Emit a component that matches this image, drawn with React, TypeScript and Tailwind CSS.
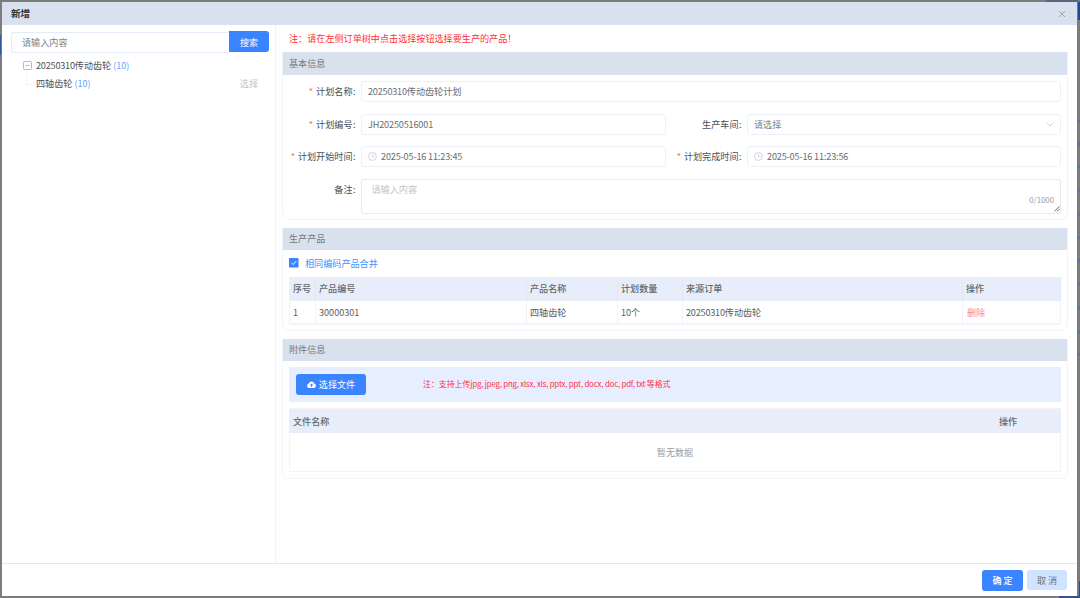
import type { ReactNode } from "react";

function Section({ title, className, titleClass, children }: { title: string; className: string; titleClass: string; children: ReactNode }) {
  return (
    <section className={`flex w-[786px] flex-col rounded-b-[7px] border border-t-0 border-[#f4f5fa] ${className}`}>
      <h2 className={`-mx-px shrink-0 border-x border-[#eef1f8] bg-[#dae1ee] pl-[6px] text-[#74787f] ${titleClass}`}>{title}</h2>
      {children}
    </section>
  );
}

function Label({ text, required, className }: { text: string; required?: boolean; className: string }) {
  return (
    <div className={`shrink-0 text-right leading-[20px] text-[#4b4e53] ${className}`}>
      {required && <span className="mr-[3px] text-[#f56c6c]">*</span>}
      {text}
      <span className="inline-block w-[4.5px] pl-[0.5px] text-left">:</span>
    </div>
  );
}

function Clock() {
  return (
    <svg viewBox="0 0 10 10" className="mr-[4px] size-[9px]" fill="none" stroke="#c0c4cc" strokeWidth="0.8">
      <circle cx="5" cy="5" r="4.4" />
      <path d="M5 2.4V5.3H7.4" />
    </svg>
  );
}

function Field({ className, children }: { className: string; children: ReactNode }) {
  return <div className={`flex h-[21px] items-center rounded-[3px] border border-[#edeffa] px-[6px] pb-px text-[#6a6c70] ${className}`}>{children}</div>;
}

const columns = "grid grid-cols-[26px_211px_91px_65px_280px_98px]";

export default function App() {
  return (
    <div className="relative flex h-[598px] w-[1080px] flex-col overflow-hidden bg-[#7d7c7d] pt-[2px] pl-[2px] font-['Noto_Sans_CJK_SC',sans-serif] text-[9.1px] leading-[14px]">
      <div className="flex h-[594px] w-[1075px] flex-col bg-white">
        <header className="flex h-[23px] shrink-0 items-center justify-between bg-[#dae1ee] pr-[11px] pl-[9px]">
          <h1 className="-mt-px text-[9.6px] font-bold text-[#303133]">新增</h1>
          <svg viewBox="0 0 8 8" className="size-[8px]" fill="none" stroke="#9a9da4" strokeWidth="0.9">
            <path d="M1 1 7 7M7 1 1 7" />
          </svg>
        </header>

        <main className="flex h-[538px] shrink-0">
          <aside className="w-[274px] shrink-0 border-r border-[#f1f2f5] pt-[6px] pl-[9px]">
            <div className="flex">
              <div className="mt-px h-[21px] w-[218px] rounded-l-[3px] border border-r-0 border-[#e3eaf8] pl-[10px] leading-[19px] text-[#7d8085]">请输入内容</div>
              <div className="h-[21px] w-[40px] rounded-r-[3px] bg-[#3a84ff] text-center leading-[22px] text-white">搜索</div>
            </div>
            <div className="mt-[3px] flex h-[18px] items-center pl-[12px] text-[#4f5257]">
              <svg viewBox="0 0 9 9" className="mr-[5px] -ml-[0.5px] size-[9px]" fill="none" stroke="#a7a9ae" strokeWidth="0.8">
                <rect x="0.5" y="0.5" width="8" height="8" rx="1" />
                <path d="M2.3 4.5H6.7" />
              </svg>
              <span className="-ml-[0.5px]"><span className="tracking-[-0.2px]">20250310</span>传动齿轮</span>
              <span className="ml-[2px] text-[#6aa2ff]">(10)</span>
            </div>
            <div className="flex h-[18px] items-center pr-[17px] pl-[15px] text-[#4f5257]">
              <span className="mr-[2px] h-[10px] w-[8px] -translate-y-[3px] border-b border-l border-dotted border-[#e8eaed]" />
              <span>四轴齿轮</span>
              <span className="ml-[2px] text-[#6aa2ff]">(10)</span>
              <span className="ml-auto text-[#c0c4cc]">选择</span>
            </div>
          </aside>

          <div className="pt-[7px] pl-[6px]">
            <p className="-mt-px h-[21px] pl-[7px] text-[#ff3131]">注：请在左侧订单树中点击选择按钮选择要生产的产品！</p>

            <Section title="基本信息" className="h-[168px]" titleClass="h-[23px] leading-[22px]">
              <div className="flex flex-col gap-[12px] pt-[6px] pr-[6px]">
                <div className="flex h-[21px]">
                  <Label text="计划名称" required className="w-[74px]" />
                  <Field className="ml-[4px] flex-1"><span className="tracking-[-0.2px]">20250310</span>传动齿轮计划</Field>
                </div>
                <div className="flex h-[20px]">
                  <Label text="计划编号" required className="w-[74px]" />
                  <Field className="ml-[4px] w-[305px] tracking-[-0.15px]">JH20250516001</Field>
                  <Label text="生产车间" className="w-[77px]" />
                  <Field className="ml-[4px] flex-1 justify-between">
                    <span className="text-[#7d8085]">请选择</span>
                    <svg viewBox="0 0 8 5" className="h-[5px] w-[8px]" fill="none" stroke="#c0c4cc" strokeWidth="0.8">
                      <path d="M.7.7 4 4.1 7.3.7" />
                    </svg>
                  </Field>
                </div>
                <div className="flex h-[21px]">
                  <Label text="计划开始时间" required className="w-[74px]" />
                  <Field className="ml-[4px] w-[305px] tracking-[-0.15px]"><Clock />2025-05-16 11:23:45</Field>
                  <Label text="计划完成时间" required className="w-[77px]" />
                  <Field className="ml-[4px] flex-1 tracking-[-0.15px]"><Clock />2025-05-16 11:23:56</Field>
                </div>
                <div className="flex h-[35px]">
                  <Label text="备注" className="w-[74px]" />
                  <div className="ml-[4px] flex flex-1 justify-between rounded-[2px] border border-[#e8eaf0] pl-[9.5px]">
                    <span className="mt-[2px] text-[#c0c4cc]">请输入内容</span>
                    <div className="flex flex-col items-end">
                      <span className="mt-[13px] mr-[6px] text-[7.8px] leading-[13px] text-[#9a9da2]">0/1000</span>
                      <svg viewBox="0 0 6 6" className="size-[6px]" fill="none" stroke="#66686c" strokeWidth="1">
                        <path d="M.3 5.5 5.5.3M3 5.5 5.5 3" />
                      </svg>
                    </div>
                  </div>
                </div>
              </div>
            </Section>

            <Section title="生产产品" className="mt-[8px] h-[103px]" titleClass="h-[22px] leading-[20px]">
              <div className="flex h-[27px] items-center pb-px pl-[6px]">
                <svg viewBox="0 0 10 10" className="mr-[6px] size-[10px]">
                  <rect width="9.5" height="9.5" rx="0.8" fill="#3a84ff" />
                  <path d="M2.4 4.8 4.2 6.6 7.3 3" fill="none" stroke="white" strokeWidth="0.9" />
                </svg>
                <span className="text-[#3a92ff]">相同编码产品合并</span>
              </div>
              <div className="ml-[6px] w-[772px] border-l border-[#edf0f8]">
                <div className={`${columns} h-[24px] bg-[#e7eef9] leading-[23px] font-medium text-[#65686d] [&>*]:border-r [&>*]:border-[#e0e7f8] [&>*]:pl-[3px]`}>
                  <span>序号</span><span>产品编号</span><span>产品名称</span><span>计划数量</span><span>来源订单</span><span>操作</span>
                </div>
                <div className={`${columns} h-[24px] border-b-2 border-[#f2f4fa] leading-[22px] text-[#5a5d62] [&>*]:border-r [&>*]:border-[#f0f2f9] [&>*]:pl-[3px]`}>
                  <span>1</span>
                  <span>30000301</span>
                  <span>四轴齿轮</span>
                  <span>10个</span>
                  <span><span className="tracking-[-0.2px]">20250310</span>传动齿轮</span>
                  <span><span className="ml-px text-[#f78989]">删除</span></span>
                </div>
              </div>
            </Section>

            <Section title="附件信息" className="mt-[8px] h-[140px]" titleClass="h-[22px] leading-[20px]">
              <div className="mt-[6px] ml-[6px] flex h-[35px] w-[772px] items-center bg-[#e6eeff] pl-[7px]">
                <div className="flex h-[21px] w-[70px] items-center justify-center rounded-[3px] bg-[#3a84ff] pb-px text-white">
                  <svg viewBox="0 0 18 14" className="mt-px mr-[3px] h-[7px] w-[9px]">
                    <path d="M4.5 14a4.5 4.5 0 0 1-.8-8.9 5.5 5.5 0 0 1 10.6 0A4.5 4.5 0 0 1 13.5 14z" fill="white" />
                    <path d="M9 12V7M6 9 9 5.8 12 9" fill="none" stroke="#3a84ff" strokeWidth="2" />
                  </svg>
                  选择文件
                </div>
                <span className="-mt-[2px] ml-[57px] text-[7.9px] text-[#ff3145]">注：支持上传<span className="tracking-[-0.21px]">jpg, jpeg, png, xlsx, xls, pptx, ppt, docx, doc, pdf, txt </span>等格式</span>
              </div>
              <div className="mt-[6px] ml-[6px] h-[64px] w-[772px] border border-[#f1f3f7]">
                <div className="-mx-px flex h-[24px] items-center bg-[#e7eef9] pl-[4px] font-medium text-[#65686d]">
                  <span className="w-[706px]">文件名称</span><span>操作</span>
                </div>
                <div className="h-[38px] text-center leading-[38px] text-[#9a9da2]">暂无数据</div>
              </div>
            </Section>
          </div>
        </main>

        <footer className="flex flex-1 items-center justify-end gap-[4px] border-t border-[#e6e7e9] pr-[10px]">
          <div className="h-[21px] w-[41px] rounded-[3px] bg-[#3a84ff] text-center leading-[21px] font-medium text-white">确 定</div>
          <div className="h-[20px] w-[40px] rounded-[3px] bg-[#d0e3ff] text-center leading-[20px] text-[#6e7278]">取 消</div>
        </footer>
      </div>

      <div className="absolute top-[2px] right-0 h-[18px] w-[2px] bg-[#214b91]" />
      <div className="absolute top-0 right-[2px] h-[2px] w-[32px] bg-[#59657d]" />
      <div className="absolute right-0 bottom-0 h-[17px] w-[1px] bg-[#214b91]" />
      <div className="absolute right-0 bottom-0 h-[2px] w-[21px] bg-[#34548b]" />
      <div className="absolute top-[35px] left-0 h-[20px] w-[1px] bg-[#315899]" />
      <div className="absolute top-[119px] right-0 flex w-[2px] flex-col gap-[20px]">
        {Array.from({ length: 11 }, (_, i) => <i key={i} className="h-[3.4px] w-[2px] bg-[#66708f]" />)}
      </div>
    </div>
  );
}
